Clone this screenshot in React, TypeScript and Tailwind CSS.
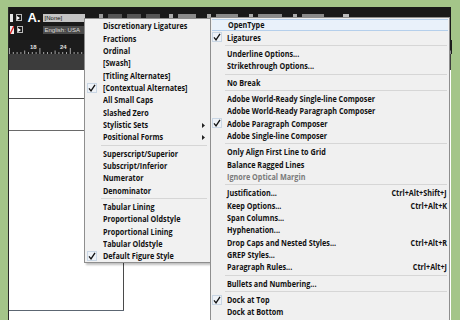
import React from 'react';

type It = { t: string; c?: boolean; s?: boolean; k?: string; d?: boolean; h?: boolean } | null;

const leftItems: It[] = [
  { t: 'Discretionary Ligatures' },
  { t: 'Fractions' },
  { t: 'Ordinal' },
  { t: '[Swash]' },
  { t: '[Titling Alternates]' },
  { t: '[Contextual Alternates]', c: true },
  { t: 'All Small Caps' },
  { t: 'Slashed Zero' },
  { t: 'Stylistic Sets', s: true },
  { t: 'Positional Forms', s: true },
  null,
  { t: 'Superscript/Superior' },
  { t: 'Subscript/Inferior' },
  { t: 'Numerator' },
  { t: 'Denominator' },
  null,
  { t: 'Tabular Lining' },
  { t: 'Proportional Oldstyle' },
  { t: 'Proportional Lining' },
  { t: 'Tabular Oldstyle' },
  { t: 'Default Figure Style', c: true },
];

const rightItems: It[] = [
  { t: 'OpenType', h: true },
  { t: 'Ligatures', c: true },
  null,
  { t: 'Underline Options...' },
  { t: 'Strikethrough Options...' },
  null,
  { t: 'No Break' },
  null,
  { t: 'Adobe World-Ready Single-line Composer' },
  { t: 'Adobe World-Ready Paragraph Composer' },
  { t: 'Adobe Paragraph Composer', c: true },
  { t: 'Adobe Single-line Composer' },
  null,
  { t: 'Only Align First Line to Grid' },
  { t: 'Balance Ragged Lines' },
  { t: 'Ignore Optical Margin', d: true },
  null,
  { t: 'Justification...', k: 'Ctrl+Alt+Shift+J' },
  { t: 'Keep Options...', k: 'Ctrl+Alt+K' },
  { t: 'Span Columns...' },
  { t: 'Hyphenation...' },
  { t: 'Drop Caps and Nested Styles...', k: 'Ctrl+Alt+R' },
  { t: 'GREP Styles...' },
  { t: 'Paragraph Rules...', k: 'Ctrl+Alt+J' },
  null,
  { t: 'Bullets and Numbering...' },
  null,
  { t: 'Dock at Top', c: true },
  { t: 'Dock at Bottom' },
];

function Check({ left }: { left: string }) {
  return (
    <div
      className={`absolute ${left} top-[1px] w-[10px] h-[10px] border border-[#c9d6e4] bg-[#eef2f7] flex items-center justify-center`}
    >
      <svg width="8" height="8" viewBox="0 0 8 8">
        <path d="M1 4.4 L3 6.8 L7 0.8" fill="none" stroke="#111" strokeWidth="1.3" />
      </svg>
    </div>
  );
}

function MenuRows({ items, side }: { items: It[]; side: 'l' | 'r' }) {
  return (
    <>
      {items.map((it, i) => {
        if (!it)
          return (
            <div key={i} className="h-[4px] flex flex-col justify-center">
              <div className={`h-px bg-[#d6d6d6] ${side === 'l' ? 'ml-[16px] mr-[3px]' : 'ml-[14px] mr-[2px]'}`} />
            </div>
          );
        return (
          <div
            key={i}
            className={`relative h-[12.33px] flex items-center ${side === 'l' ? 'pl-[18px]' : 'pl-[16px]'} ${
              it.h ? 'bg-[#e9f1fa] border-y border-[#b5cfeb] mx-[1px] pl-[15px]' : ''
            }`}
          >
            {it.c && <Check left={side === 'l' ? 'left-[2px]' : 'left-[1px]'} />}
            <span
              className={`block whitespace-nowrap origin-left scale-x-[0.76] ${it.d ? 'text-[#7a7a7a]' : 'text-[#111]'}`}
            >
              {it.t}
            </span>
            {it.s && (
              <svg className="absolute right-[5px] top-[4px]" width="3" height="5" viewBox="0 0 3 5">
                <polygon points="0,0 3,2.5 0,5" fill="#222" />
              </svg>
            )}
            {it.k && (
              <span className="absolute right-[2px] top-[1.5px] block whitespace-nowrap origin-right scale-x-[0.76] text-[#111]">
                {it.k}
              </span>
            )}
          </div>
        );
      })}
    </>
  );
}

function Ruler() {
  const ticks = [];
  for (let x = 0; x < 443; x += 3.8) {
    const idx = Math.round(x / 3.8);
    const h = idx % 8 === 0 ? 6 : idx % 4 === 0 ? 3.5 : 2;
    ticks.push(<line key={idx} x1={x + 0.5} x2={x + 0.5} y1={14 - h} y2={14} stroke="#c8c8c8" strokeWidth="0.8" />);
  }
  return (
    <svg width="443" height="14" className="block">
      <rect width="443" height="14" fill="#1c1c1c" />
      {ticks}
      <text x="21" y="9" fontSize="6" fill="#e0e0e0" fontFamily="Liberation Sans, sans-serif">18</text>
      <text x="51" y="9" fontSize="6" fill="#e0e0e0" fontFamily="Liberation Sans, sans-serif">24</text>
    </svg>
  );
}

export default function App() {
  return (
    <div className="relative w-[460px] h-[320px] overflow-hidden bg-[#a4c589] font-['Open_Sans',sans-serif] text-[9.5px] font-bold leading-none">
      <div className="absolute left-[8px] top-[7px] w-[443px] h-[313px] flex flex-col border-l border-[#2a2a2a]">
        {/* Toolbar */}
        <div className="h-[33px] bg-[#191919] flex">
          <div className="w-[76px] flex flex-col gap-[3px] pt-[6px]">
            <div className="h-[9px] flex items-center">
              <div className="w-[3px] h-[8px] bg-[#e8e8e8] ml-[1px]" />
              <div className="w-[6px] h-[7px] ml-[3px] border border-[#bbb] flex items-center justify-center">
                <div className="w-0 h-0 border-y-[2px] border-y-transparent border-l-[3px] border-l-white" />
              </div>
              <span className="ml-[6px] text-[13px] text-white font-bold font-['Liberation_Sans',sans-serif] leading-none">A.</span>
              <div className="ml-[2px] w-[45px] h-[8px] bg-[#c4c4c4] flex items-center pl-[2px]">
                <span className="text-[6px] text-[#111] font-normal font-['Liberation_Sans',sans-serif]">[None]</span>
              </div>
            </div>
            <div className="h-[9px] flex items-center">
              <svg width="4" height="8" className="ml-[1px]">
                <rect width="4" height="8" fill="#eee" />
                <line x1="0" y1="8" x2="4" y2="0" stroke="#d22" strokeWidth="1.4" />
              </svg>
              <div className="w-[6px] h-[7px] ml-[3px] border border-[#bbb] flex items-center justify-center">
                <div className="w-0 h-0 border-y-[2px] border-y-transparent border-l-[3px] border-l-white" />
              </div>
              <div className="ml-[20px] w-[45px] h-[8px] bg-[#4a4a4a] flex items-center pl-[2px]">
                <span className="text-[6px] text-[#ddd] font-normal font-['Liberation_Sans',sans-serif]">English: USA</span>
              </div>
            </div>
          </div>
          <div className="flex-1 flex items-start gap-[5px] pt-[6px] pl-[14px]">
            <div className="w-[4px] h-[4px] bg-[#999] mt-[1px]" />
            <div className="w-[14px] h-[5px] bg-[#555] mt-[1px]" />
            <div className="w-[14px] h-[5px] bg-[#555] mt-[1px]" />
            <div className="w-[14px] h-[5px] bg-[#555] mt-[1px]" />
            <div className="w-[4px] h-[5px] bg-[#aaa] mt-[1px] ml-[4px]" />
            <div className="w-[18px] h-[5px] bg-[#8a8a8a] mt-[1px]" />
            <div className="w-[4px] h-[5px] bg-[#aaa] mt-[1px] ml-[6px]" />
            <div className="w-[22px] h-[5px] bg-[#8a8a8a] mt-[1px]" />
            <div className="w-[4px] h-[5px] bg-[#aaa] mt-[1px] ml-[6px]" />
            <div className="w-[24px] h-[5px] bg-[#8a8a8a] mt-[1px]" />
            <div className="w-[4px] h-[5px] bg-[#aaa] mt-[1px] ml-[6px]" />
            <div className="w-[22px] h-[5px] bg-[#8a8a8a] mt-[1px]" />
            <div className="w-[6px] h-[4px] bg-[#bbb] mt-[1px] ml-[14px]" />
          </div>
        </div>
        {/* Ruler */}
        <Ruler />
        {/* gray band */}
        <div className="h-[16px] bg-[#3c3c3c]" />
        {/* Document */}
        <div className="relative flex-1 bg-white">
          <div className="absolute left-0 top-[28px] w-[100px] h-px bg-[#4d4d4d]" />
          <div className="absolute left-0 top-[60px] w-[100px] h-px bg-[#6a6a6a]" />
          <div className="absolute left-[114px] top-[186px] w-px h-[55px] bg-[#4a4a4a]" />
          <div className="absolute left-0 top-[240px] w-[115px] h-px bg-[#5c6672]" />
        </div>
      </div>

      {/* Left menu */}
      <div className="absolute left-[84px] top-[18px] w-[127px] bg-[#f1f1f1] border border-[#8e8e8e] pt-[1px] shadow-[2px_2px_2px_rgba(0,0,0,0.25)]">
        <MenuRows items={leftItems} side="l" />
      </div>

      {/* Right menu */}
      <div className="absolute left-[210px] top-[17px] w-[240px] h-[320px] bg-[#f0f0f0] border border-[#8e8e8e] pt-[1px]">
        <MenuRows items={rightItems} side="r" />
      </div>
    </div>
  );
}
